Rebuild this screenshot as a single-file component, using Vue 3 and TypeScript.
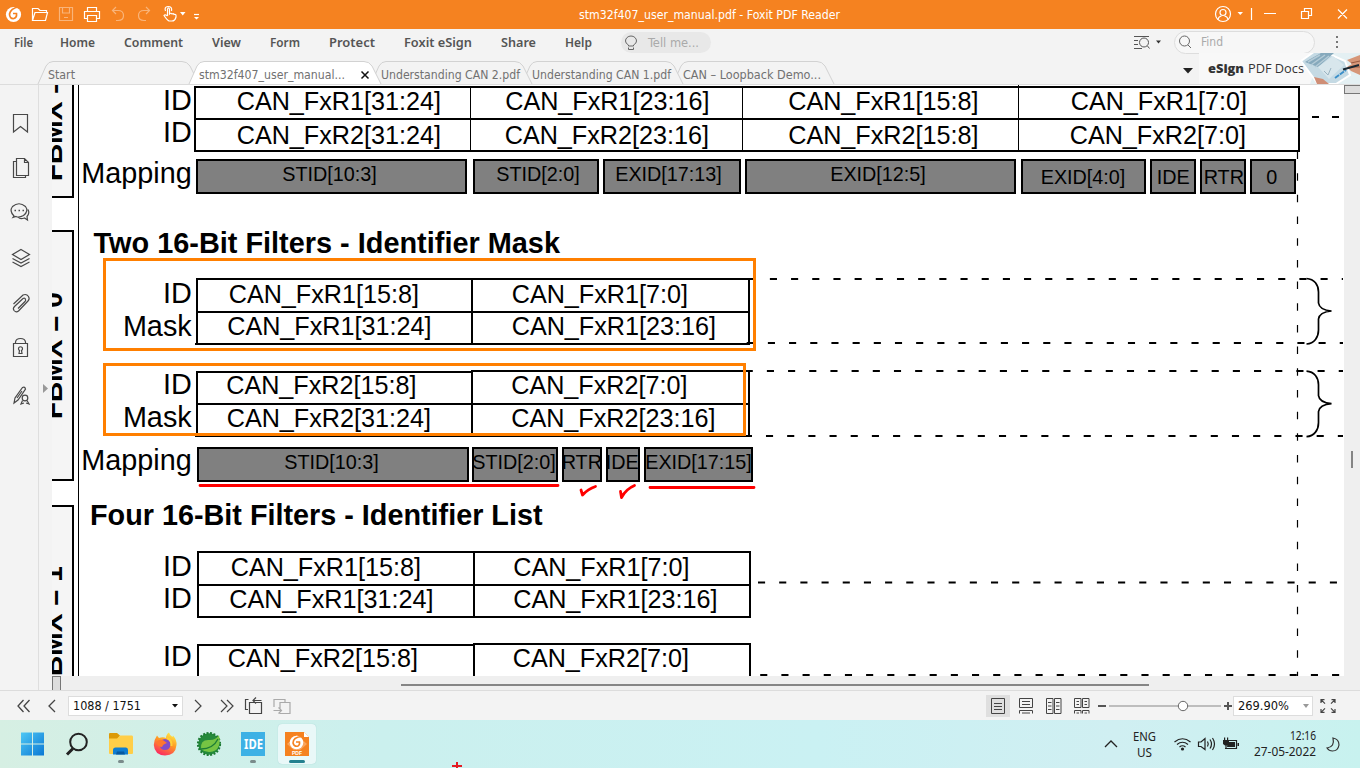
<script setup lang="ts">
import { h } from 'vue'

interface LabelProps { t: string; w: number; hgt?: number }

// Text fitted to a known width, so that interface labels keep their measure in any font.
const Label = (p: LabelProps) => {
  const height = p.hgt ?? 16
  return h('svg', { class: 'label', width: p.w, height, viewBox: `0 0 ${p.w} ${height}` }, [
    h('text', { x: 0, y: height - 4, textLength: p.w, lengthAdjust: 'spacingAndGlyphs', fill: 'currentColor' }, p.t),
  ])
}
Label.props = ['t', 'w', 'hgt']

const menus = [
  { t: 'File', w: 19 }, { t: 'Home', w: 35 }, { t: 'Comment', w: 59 }, { t: 'View', w: 29 },
  { t: 'Form', w: 30 }, { t: 'Protect', w: 46 }, { t: 'Foxit eSign', w: 68 },
  { t: 'Share', w: 35 }, { t: 'Help', w: 27 },
]

interface Tab { t: string; w: number; width: number; active?: boolean; z: number }
const tabs: Tab[] = [
  { t: 'Start', w: 27, width: 161, z: 1 },
  { t: 'stm32f407_user_manual...', w: 146, width: 192, active: true, z: 9 },
  { t: 'Understanding CAN 2.pdf', w: 139, width: 161, z: 4 },
  { t: 'Understanding CAN 1.pdf', w: 139, width: 161, z: 3 },
  { t: 'CAN – Loopback Demo...', w: 138, width: 161, z: 2 },
]
const tabPath = (w: number) => `M0 24 L8 6 Q10.500 1.500 15 1.500 H${w - 17} Q${w - 12} 1.500 ${w - 9} 6 L${w} 24`

type T = [string, number, number]
const rowLabels: T[] = [
  ['ID', 191.7, 110], ['ID', 191.7, 142], ['Mapping', 191.7, 183],
  ['ID', 191.7, 303], ['Mask', 191.7, 336], ['ID', 191.7, 393.500], ['Mask', 191.7, 427], ['Mapping', 191.7, 469.500],
  ['ID', 191.7, 575.500], ['ID', 191.7, 608], ['ID', 191.7, 666],
]
const cells: T[] = [
  ['CAN_FxR1[31:24]', 236, 110], ['CAN_FxR1[23:16]', 504.5, 110], ['CAN_FxR1[15:8]', 787.5, 110], ['CAN_FxR1[7:0]', 1070, 110],
  ['CAN_FxR2[31:24]', 236, 144], ['CAN_FxR2[23:16]', 504, 144], ['CAN_FxR2[15:8]', 787.5, 144], ['CAN_FxR2[7:0]', 1069, 144],
  ['CAN_FxR1[15:8]', 228, 303], ['CAN_FxR1[7:0]', 511, 303], ['CAN_FxR1[31:24]', 226.5, 335], ['CAN_FxR1[23:16]', 511, 335],
  ['CAN_FxR2[15:8]', 225.5, 394], ['CAN_FxR2[7:0]', 510.5, 394], ['CAN_FxR2[31:24]', 226, 427], ['CAN_FxR2[23:16]', 510.5, 427],
  ['CAN_FxR1[15:8]', 230, 576], ['CAN_FxR1[7:0]', 512.5, 576], ['CAN_FxR1[31:24]', 228.5, 608], ['CAN_FxR1[23:16]', 512.5, 608],
  ['CAN_FxR2[15:8]', 227, 667], ['CAN_FxR2[7:0]', 512, 667],
]
const bits: T[] = [
  ['STID[10:3]', 281.5, 181], ['STID[2:0]', 495.5, 181], ['EXID[17:13]', 614.5, 181], ['EXID[12:5]', 829.5, 181],
  ['EXID[4:0]', 1040, 184], ['IDE', 1156, 184], ['RTR', 1203, 184], ['0', 1265.500, 184],
  ['STID[10:3]', 283.5, 469], ['STID[2:0]', 471.500, 469], ['RTR', 561, 469], ['IDE', 605, 469], ['EXID[17:15]', 644.500, 469],
]
const upper = [[196, 271], [473, 126], [603, 138], [745, 271], [1021, 125], [1150, 46], [1200, 46], [1250, 46]]
const lower = [[197, 272], [472, 86], [562, 40], [606, 34], [644, 109]]
const dashes = [[748.7, 279], [746.7, 343], [745.7, 371], [744.800, 436], [758, 582.5], [760.2, 675]]
const braces = [278, 370.7]
</script>

<template>
  <div class="app">
    <header class="title">
      <div class="quick">
        <svg width="200" height="29" viewBox="0 0 200 29" fill="none" stroke="#fff" stroke-width="1.200">
          <circle cx="13.500" cy="14.500" r="7.600" fill="#fff" stroke="none" />
          <path d="M20 7 C13 7 10 11 9.500 14 Q9.500 19 14 18.500 Q17 17.500 16.500 13.500 L13 13.500" stroke="#f58220" stroke-width="1.700" />
          <path d="M32.500 20.500 V8.500 H38 L40 10.500 H46.500 V12.500 M32.500 20.500 H45.500 L47.500 12.500 H35 Z" />
          <g opacity=".4"><path d="M59.500 7.500 H72.500 V20.500 H59.500 Z M62.500 7.500 V13 H69.500 V7.500 M64 17.500 H68" /></g>
          <path d="M87.500 11 V7.500 H96.500 V11 M87.500 18.500 H84.500 V11.500 H99.500 V18.500 H96.500 M87.500 15.500 H96.500 V21.500 H87.500 Z" />
          <g opacity=".4">
            <path d="M113 10.500 H118 Q123.500 10.500 123.500 15.500 Q123.500 20.500 118 20.500 H116 M116 7 L112.500 10.500 L116 14" />
            <path d="M149 10.500 H144 Q138.500 10.500 138.500 15.500 Q138.500 20.500 144 20.500 H146 M146 7 L149.500 10.500 L146 14" />
          </g>
          <path d="M167.500 16 V9 Q168.500 7 169.500 9 V14 Q171 12.500 172 14 Q173.500 13 174 14.500 Q176 14 176 15.500 V17 Q175 21 172 21 H169 Q167 20 164 15.500 Q165 14 167.500 16 M165.500 11 Q164 7 168 6.500 Q172.500 6.500 171.500 11" />
          <path d="M180 12 H185.500 L182.750 15.500 Z M194 17 H199 L196.500 19.500 Z" fill="#fff" stroke="none" />
          <path d="M194 14.500 H199" />
        </svg>
      </div>
      <Label class="caption" t="stm32f407_user_manual.pdf - Foxit PDF Reader" :w="261" />
      <svg class="window" width="150" height="29" viewBox="0 0 150 29" fill="none" stroke="#fff" stroke-width="1.200">
        <circle cx="13" cy="14" r="7.500" /><circle cx="13" cy="12.500" r="3" /><path d="M8 19.500 Q8.500 16.500 11.500 16 M18 19.500 Q17.500 16.500 14.500 16" />
        <path d="M27.500 12 H33 L30.250 15 Z" fill="#fff" stroke="none" />
        <path d="M41.500 8 V20 M54 13.500 H66" />
        <path d="M91.500 11.500 H98.500 V18.500 H91.500 Z M94.500 11 V8.500 H101.500 V15.500 H99 M128 9.500 L137 18.500 M137 9.500 L128 18.500" />
      </svg>
    </header>

    <nav class="menu">
      <div class="items"><Label v-for="m in menus" :key="m.t" :t="m.t" :w="m.w" /></div>
      <div class="tell">
        <svg width="14" height="16" viewBox="0 0 14 16" fill="none" stroke="#666"><path d="M4.500 11 V10 Q1.500 8.500 1.500 6 A5.500 5 0 0 1 12.500 6 Q12.500 8.500 9.500 10 V11 Z M4.500 12.500 V14.500 H9.500 V12.500" /></svg>
        <Label t="Tell me..." :w="51" />
      </div>
      <div class="search">
        <svg class="adv" width="28" height="16" viewBox="0 0 28 16" fill="none" stroke="#555">
          <path d="M0 2.500 H15 M0 6.500 H4 M0 10.500 H4 M0 14.500 H8 M13.500 12 L15.500 14.500" /><circle cx="10" cy="8.500" r="4.500" /><path d="M22 6.500 H27 L24.500 9.500 Z" fill="#333" stroke="none" />
        </svg>
        <div class="find">
          <svg width="13" height="14" viewBox="0 0 13 14" fill="none" stroke="#666"><circle cx="5.500" cy="6" r="5" /><path d="M9 10 L12 13" /></svg>
          <Label t="Find" :w="22" />
        </div>
        <svg width="4" height="14" viewBox="0 0 4 14" fill="#777"><path d="M1 1h2v2H1zM1 6h2v2H1zM1 11h2v2H1z" /></svg>
      </div>
    </nav>

    <div class="tabs">
      <div v-for="tab in tabs" :key="tab.t" class="tab" :class="{ active: tab.active }" :style="{ width: tab.width + 'px', zIndex: tab.z }">
        <svg class="shape" :width="tab.width" height="24" :viewBox="`0 0 ${tab.width} 24`"><path :d="tabPath(tab.width)" :fill="tab.active ? '#fff' : '#f3f3f3'" stroke="#d2d2d2" /></svg>
        <Label class="tabtext" :t="tab.t" :w="tab.w" />
        <svg v-if="tab.active" class="close" width="8" height="8" viewBox="0 0 8 8" stroke="#111" stroke-width="1.500"><path d="M.5 .5 L7.500 7.500 M7.500 .5 L.5 7.500" /></svg>
      </div>
      <svg class="more" width="10" height="6" viewBox="0 0 10 6"><path d="M0 0 H10 L5 5.500 Z" fill="#222" /></svg>
      <div class="promo">
        <Label class="strong" t="eSign" :w="36" /><Label class="light" t="PDF Docs" :w="56" />
        <svg width="60" height="31" viewBox="0 0 60 31">
          <path d="M22 0 H60 V31 H10 Z" fill="#e4f0f3" />
          <path d="M1 8 L18 -4 L45 8 L50 22 L36 31 H18 Z" fill="#c5dae4" stroke="#fff" stroke-width="2" />
          <path d="M5 9 L21 0 L34 0 L18 14 Z" fill="#86a9bc" />
          <path d="M18 14 L33 3 L44 12 L29 26 Z" fill="#d8e6ec" />
          <path d="M8 9 L20 2 M11 12 L25 2 M15 14 L29 3" stroke="#b4cbd7" stroke-width="1.500" />
          <path d="M24 18 L28 22 L31 15" fill="none" stroke="#9ab3c1" />
          <path d="M35 25 L46 17" stroke="#3b8fc9" stroke-width="2" stroke-dasharray="5 1" />
          <path d="M14 24 L23 26 L29 31 H17 Z" fill="#cf8e76" />
          <path d="M47 7 L60 2 V22 L51 18 L47 14 L52 11 Z" fill="#d69678" /><path d="M51 10 L60 8 M52 14 L60 14" stroke="#99583f" />
          <path d="M43 16.500 L59 12" stroke="#192732" stroke-width="2" />
        </svg>
      </div>
    </div>

    <main class="work">
      <aside class="side">
        <svg width="38" height="340" viewBox="0 85 38 340" fill="none" stroke="#484848" stroke-width="1.200">
          <path d="M13.500 114.500 H27.500 V132 L20.500 126.500 L13.500 132 Z" />
          <path d="M16.500 158.500 H24.500 L28.500 162.500 V175.500 H16.500 Z M24.500 158.500 V162.500 H28.500 M16 161.500 H13.500 V177.500 H25.500 V176" />
          <path d="M14 216 Q9 211 12.500 206.500 Q19 201 25.500 206.500 Q29 211 23.500 215.500 Q19 218 16 216.500 L13 217.500 Z M28 209.500 Q30 213 27 216.500 L27.500 220 L24.500 218 Q20 219.500 18.500 217.500" />
          <path d="M14.500 210.500 H16 M18.500 210.500 H20 M22.500 210.500 H24" stroke-width="1.600" />
          <path d="M21 249.500 L29.500 254.500 L21 259.500 L12.500 254.500 Z M12.500 258.500 L21 263 L29.500 258.500 M12.500 262 L21 266.500 L29.500 262" />
          <path d="M13.500 304 L23 295 Q26.500 293.500 28.500 296.500 Q30 299 28 301 L18.500 311 Q16 313 14 310.500 Q12.500 308.500 14.500 306.500 L23 298.500 Q25 297.500 25.500 299.500 Q26 300.500 25 301.500 L18 308.500" />
          <path d="M13.500 343.500 H27.500 V356.500 H13.500 Z M15.500 343.500 V342 Q16 338.500 20.500 338.500 Q25 338.500 25.500 342 V343.500 M19.500 350.500 A2 2 0 1 1 21.500 350.500 L22 353.500 H19 Z" />
          <path d="M14 403 L15 398 L22.500 387.500 Q25 386.500 25.500 389 L18 400 Z M17 398 L22 391 M22.500 400.500 L21 404 L24 403 M27 400.500 L29 404 L26 403" /><circle cx="25" cy="398" r="2.800" />
        </svg>
      </aside>
      <div class="grip"><svg width="5" height="9" viewBox="0 0 5 9"><path d="M0 0 V9 L5 4.500 Z" fill="#999" /></svg></div>
      <div class="view">
        <svg class="page" width="1292" height="591" viewBox="52 85 1292 591" fill="none" stroke="#000">
          <g class="regs" fill="#f5f5f5" stroke-width="2">
            <rect x="30" y="60" width="43" height="137" /><rect x="30" y="231" width="43" height="249" /><rect x="30" y="506" width="43" height="200" />
          </g>
          <g class="fbm">
            <text transform="translate(61.5 181) rotate(-90)">FBMX = 1</text>
            <text transform="translate(61.5 419) rotate(-90)">FBMX = 0</text>
            <text transform="translate(61.5 693) rotate(-90)">FBMX = 1</text>
          </g>
          <path d="M78.500 85 V676 M742.500 87 V151 M1018.500 85 V151 M470.500 87 V151" />
          <g stroke-width="2">
            <path d="M195 87 H1299 V151 H195 Z M195 119 H1299" />
            <path d="M195 344 H750 M197 344 V279 H749 V344 M197 312 H749 M472 279 V344" />
            <path d="M195 436 H752 M197 436 V372 H472 M472 436 V371 H749 V436 M197 404 H749" />
            <path d="M198 552 H750 V617 H198 Z M198 585 H750 M474 552 V617 M198 680 V645 H474 M474 680 V644 H750 V680" />
            <g fill="#808080">
              <rect v-for="b in upper" :key="b[0]" :x="b[0]! + 1" y="160" :width="b[1]! - 2" height="33" />
              <rect v-for="b in lower" :key="b[0]" :x="b[0]! + 1" y="448" :width="b[1]! - 2" height="33" />
            </g>
            <path v-for="d in dashes" :key="d[1]" :d="`M${d[0]} ${d[1]} H1343`" stroke-dasharray="7.100 14.080" />
            <path d="M1312 117 H1339" stroke-dasharray="7 13" />
          </g>
          <path d="M1297.500 151.500 V676" stroke-dasharray="7.500 14.180" stroke-width="1.200" />
          <path v-for="y in braces" :key="y" :transform="`translate(1306.500 ${y})`" d="M0 .5 C8 1 12 7 12 14 V25 Q13 32 25 33 Q13 34 12 41 V52 C12 59 8 65.500 0 66" stroke-width="1.700" />
          <g class="head">
            <text x="93.500" y="252.500" textLength="466.500" lengthAdjust="spacingAndGlyphs">Two 16-Bit Filters - Identifier Mask</text>
            <text x="90" y="524.500" textLength="452.500" lengthAdjust="spacingAndGlyphs">Four 16-Bit Filters - Identifier List</text>
          </g>
          <g class="rowlabel"><text v-for="r in rowLabels" :key="r[2]" :x="r[1]" :y="r[2]">{{ r[0] }}</text></g>
          <g class="cell"><text v-for="(c, i) in cells" :key="i" :x="c[1] + 0.7" :y="c[2]">{{ c[0] }}</text></g>
          <g class="bit"><text v-for="(c, i) in bits" :key="i" :x="c[1] + 0.7" :y="c[2]">{{ c[0] }}</text></g>
          <g stroke="#ff7f00" stroke-width="3"><rect x="104.500" y="259.500" width="650" height="90" /><rect x="104.500" y="364.500" width="640" height="70" /></g>
          <g stroke="#f00" stroke-width="2.800" stroke-linecap="round" stroke-linejoin="round">
            <path d="M200 485.500 H558 M650 487.500 H754" />
            <path d="M581 490 L582.500 495 Q588 489 595.500 486.500 M620.500 491.500 L621.500 497.500 Q626 489 634.500 485.500" />
          </g>
        </svg>
        <div class="hbar"><i class="stub"></i><i class="hthumb"></i></div>
      </div>
      <div class="vbar"><i class="vtop"></i><i class="vthumb"></i></div>
    </main>

    <footer class="status">
      <svg width="40" height="14" viewBox="0 0 40 14" fill="none" stroke="#444" stroke-width="1.300"><path d="M6.500 1 L1 7 L6.500 13 M12.500 1 L7 7 L12.500 13 M38 1 L32 7 L38 13" /></svg>
      <div class="pagebox"><Label t="1088 / 1751" :w="68" /><svg width="6" height="4" viewBox="0 0 6 4"><path d="M0 0 H6 L3 3.500 Z" fill="#111" /></svg></div>
      <svg width="100" height="18" viewBox="0 0 100 18" fill="none" stroke="#444" stroke-width="1.200">
        <path d="M1 3 L7 9 L1 15 M27 3 L33 9 L27 15 M33 3 L39 9 L33 15" />
        <path d="M56 5.500 H68 V16.500 H56 Z M55 2.500 H52 V12.500 H54.500 M68 3.500 H59.500 M62.500 .5 L59.500 3.500 L62.500 6.500" transform="translate(-.5 0)" />
        <path d="M80 10 V2.500 H91 V5 M86 13 V5.500 H96 V16.500 H85.500 M79.500 13.500 H87.500 M84.500 10.500 L87.500 13.500 L84.500 16.500" stroke="#aaa" />
      </svg>
      <div class="modes">
        <span class="mode on"><svg width="16" height="16" viewBox="0 0 16 16"><path d="M1.500 .5 H14.500 V15.500 H1.500 Z M4 5.500 H12 M4 8.500 H12 M4 11.500 H12" /></svg></span>
        <span class="mode"><svg width="16" height="16" viewBox="0 0 16 16"><path d="M1.500 .5 H14.500 V9.500 H1.500 Z M4 3.500 H12 M4 6.500 H12 M1.500 15.500 V12.500 H14.500 V15.500 M4 15 H12" /></svg></span>
        <span class="mode"><svg width="16" height="16" viewBox="0 0 16 16"><path d="M.5 .5 H7 V15.500 H.5 Z M8.500 .5 H15 V15.500 H8.500 Z M2 4.500 H5.500 M2 8 H5.500 M2 11.500 H5.500 M10 4.500 H13.500 M10 8 H13.500 M10 11.500 H13.500" /></svg></span>
        <span class="mode"><svg width="16" height="16" viewBox="0 0 16 16"><path d="M.5 .5 H7 V9.500 H.5 Z M8.500 .5 H15 V9.500 H8.500 Z M2.500 3.500 H5 M2.500 6.500 H5 M10.500 3.500 H13 M10.500 6.500 H13 M.5 15.500 V12.500 H7 V15.500 M8.500 15.500 V12.500 H15 V15.500 M2.500 15 H5 M10.500 15 H13" /></svg></span>
      </div>
      <svg width="138" height="12" viewBox="0 0 138 12"><path d="M0 6 H8 M126 6 H134 M130 2 V10" stroke="#555" stroke-width="2" /><path d="M11 6 H123" stroke="#bdbdbd" stroke-width="2" /><circle cx="85" cy="6" r="4.700" fill="#fff" stroke="#666" /></svg>
      <div class="zoom"><Label t="269.90%" :w="51" /><svg width="6" height="4" viewBox="0 0 6 4"><path d="M0 0 H6 L3 4 Z" fill="#999" /></svg></div>
      <svg class="full" width="16" height="14" viewBox="0 0 16 14" fill="none" stroke="#444" stroke-width="1.200"><path d="M1 4 V.6 H4.500 M1 .6 L5 4.600 M11.500 .6 H15 V4 M15 .6 L11 4.600 M1 10 V13.400 H4.500 M1 13.400 L5 9.400 M15 10 V13.400 H11.500 M15 13.400 L11 9.400" /></svg>
    </footer>

    <div class="taskbar">
      <div class="pins">
        <span class="pin"><svg width="24" height="24" viewBox="0 0 24 24">
          <defs><linearGradient id="win" x1="0" y1="0" x2="1" y2="1" gradientUnits="objectBoundingBox"><stop offset="0" stop-color="#4fc8f5" /><stop offset="1" stop-color="#0a78d4" /></linearGradient></defs>
          <path d="M0 .5 H11 V11.500 H0 Z M12 .5 H23 V11.500 H12 Z M0 12.500 H11 V23.500 H0 Z M12 12.500 H23 V23.500 H12 Z" fill="url(#win)" /></svg></span>
        <span class="pin"><svg width="24" height="24" viewBox="0 0 24 24" fill="none" stroke="#222"><circle cx="13.500" cy="10" r="8.300" stroke-width="2" /><path d="M8 16.500 L2 22.500" stroke-width="3" /></svg></span>
        <span class="pin"><svg width="26" height="24" viewBox="0 0 26 24"><path d="M1 2 Q1 1 2 1 H9 L12 3.500 L10 7 H1 Z" fill="#dc9a08" /><path d="M1 6.500 H9 L12 3.500 H24 Q25 3.500 25 5 V21 Q25 22 24 22 H2 Q1 22 1 21 Z" fill="#ffce48" /><path d="M5 22.500 V18 Q5 15.500 7.500 15.500 H18 Q20 15.500 20 18 V22.500 Z" fill="#0f7dd0" /><path d="M8 22.500 L9 19.500 H16 L17 22.500 Z" fill="#0759a0" /></svg><i class="dot"></i></span>
        <span class="pin"><svg width="24" height="24" viewBox="0 0 24 24">
          <defs><linearGradient id="fox" x1=".8" y1="0" x2=".3" y2="1"><stop offset="0" stop-color="#fff04a" /><stop offset=".45" stop-color="#ff9a24" /><stop offset="1" stop-color="#fb2564" /></linearGradient></defs>
          <path d="M4 3.500 L6 6 Q10 4.500 13 6 Q13 2.500 16 .5 Q17 4 19.500 5 L20 3.500 Q24 8 23.500 13 Q22.500 23.500 12 23.500 Q1.500 23 .8 13 Q.8 8 4 3.500 Z" fill="url(#fox)" />
          <circle cx="12" cy="12.500" r="5.500" fill="#824cc8" /><path d="M3 10 Q8 6 12 9.500 L14 11 Q10 12 9 15 Q5 15 3 10 Z" fill="#ff7630" /><path d="M14 6 Q19 8 18.500 14" fill="none" stroke="#ffcf38" stroke-width="2" /></svg></span>
        <span class="pin"><svg width="26" height="26" viewBox="0 0 26 26"><circle cx="13" cy="13" r="10.700" fill="#258a3b" /><circle cx="13" cy="13" r="11" fill="none" stroke="#1c7b33" stroke-width="2.200" stroke-dasharray="2 1.500" /><path d="M5 18 Q4 8 14 9 Q20 9 23 4 Q26 20 14 21 Q9 21.500 5 18 Z" fill="#76c443" /><path d="M5 18 Q17 18 22 8" fill="none" stroke="#1d7d37" stroke-width="1.300" /></svg></span>
        <span class="pin"><span class="ide"><Label t="IDE" :w="19" :hgt="18" /></span><i class="dot"></i></span>
        <span class="pin sel"><svg width="24" height="24" viewBox="0 0 24 24"><path d="M0 0 H19 L24 5 V24 H0 Z" fill="#f58220" /><path d="M19 0 V5 H24" fill="#fff" /><path d="M2 12 L12 3 L22 12 L12 21 Z" fill="#f9a45d" /><circle cx="11.500" cy="10.500" r="6.800" fill="#fff" /><path d="M17 4.500 Q8 5 8 11 Q9 15 13 14 Q15 13 14.500 10 H11" fill="none" stroke="#f58220" stroke-width="1.600" /><rect x="6" y="18" width="12" height="5.500" fill="#f58220" /><text class="pdf" x="7" y="22.500" textLength="10" lengthAdjust="spacingAndGlyphs">PDF</text></svg><i class="dot wide"></i></span>
      </div>
      <svg class="cross" width="10" height="6" viewBox="0 0 10 6"><path d="M0 4 H10 M5 0 V6" stroke="#e31b23" stroke-width="2" /></svg>
      <div class="tray">
        <svg width="14" height="8" viewBox="0 0 14 8" fill="none" stroke="#222" stroke-width="1.300"><path d="M1 7 L7 1 L13 7" /></svg>
        <div class="lang"><Label t="ENG" :w="23" /><Label t="US" :w="15" /></div>
        <svg class="sys" width="66" height="16" viewBox="0 0 66 16" fill="none" stroke="#222" stroke-width="1.200">
          <path d="M.5 6 Q8.500 -.5 16.500 6 M3 8.500 Q8.500 4 14 8.500 M5.500 11 Q8.500 8.500 11.500 11" /><circle cx="8.500" cy="13" r="1.600" fill="#222" stroke="none" />
          <path d="M24.500 6 H27 L31 2.500 V13.500 L27 10.500 H24.500 Z M33.500 5.500 Q35 8 33.500 10.500 M36 3.500 Q39 8 36 12.500 M38.500 2 Q42.500 8 38.500 14" />
          <path d="M52 4.500 H62.500 V12.500 H51" /><path d="M54 6 H61 V11 H53 Z M63.500 7 H65 V10 H63.500 Z M49 4 H55 V8 L53 9.500 H51 L49 8 Z M50 1.500 H51.200 V4 H50 Z M53 1.500 H54.200 V4 H53 Z" fill="#222" stroke="none" /><path d="M52 9 V13" />
        </svg>
        <div class="clock"><Label t="12:16" :w="26" /><Label t="27-05-2022" :w="62" /></div>
        <svg width="14" height="15" viewBox="0 0 14 15" fill="none" stroke="#333" stroke-width="1.200"><path d="M7 1 Q13 2 13 8 Q12 14 6.500 14 Q3 14 1 11 Q9 10 7 1 Z" /></svg>
      </div>
    </div>
  </div>
</template>

<style>
html, body { background: #f3f3f3; overflow: hidden; }
</style>

<style scoped>
.app { width: 1360px; height: 768px; display: flex; flex-direction: column; overflow: hidden; background: #f3f3f3; font: 12px "DejaVu Sans Condensed", "DejaVu Sans", "Noto Sans", sans-serif; color: #555; }
svg { display: block; flex: none; overflow: visible; }
i { display: block; }
.title { height: 29px; flex: none; background: #f58220; color: #fff; display: grid; grid-template-columns: 579px 261px 1fr; align-items: center; }
.caption { margin-top: 1px; }
.window { justify-self: start; margin-left: 370px; }
.menu { height: 31px; flex: none; display: flex; align-items: center; }
.items { display: flex; gap: 29px; width: 621px; padding: 0 0 4px 14px; box-sizing: border-box; font-family: "Noto Sans", "Open Sans", sans-serif; font-weight: 600; font-size: 12.5px; color: #555; }
.items .label:first-child { margin-right: -2px; }
.tell { display: flex; align-items: center; gap: 10px; width: 90px; height: 21px; padding-left: 3px; margin-bottom: 4px; border-radius: 11px; background: #e8e8e8; color: #aaa; box-sizing: border-box; }
.search { margin-left: 423px; margin-bottom: 5px; display: flex; align-items: center; }
.adv { margin-right: 12px; }
.find { display: flex; align-items: center; gap: 9px; box-sizing: border-box; width: 141px; height: 23px; border: 1px solid #ddd; border-radius: 12px; background: #f7f7f7; padding-left: 4px; color: #aaa; margin-right: 20px; }
.tabs { height: 24px; flex: none; display: flex; padding-left: 38px; border-bottom: 1px solid #dcdcdc; color: #717171; }
.tab { height: 24px; display: flex; align-items: center; position: relative; margin-right: -10px; padding-left: 10px; box-sizing: border-box; flex: none; }
.shape { position: absolute; left: 0; top: 0; }
.tabtext { position: relative; margin-top: 5px; }
.close { position: relative; margin: 6px 0 0 16px; }
.more { margin: 8px 0 0 auto; align-self: flex-start; }
.promo { width: 161px; height: 31px; margin: -7px 0 0 6px; display: flex; align-items: center; background: #f8f8f8; box-sizing: border-box; padding-left: 9px; overflow: hidden; font-family: "Open Sans", sans-serif; font-size: 13px; color: #333; flex: none; }
.strong { font-weight: 800; margin-right: 4px; }
.light { margin-right: -4px; }
.work { height: 605px; flex: none; display: flex; }
.side { width: 38px; border-right: 1px solid #dedede; }
.grip { width: 13px; display: flex; box-sizing: border-box; padding: 299px 0 0 4px; }
.view { width: 1292px; background: #fff; }
.page { overflow: hidden; }
.page text { stroke: none; fill: #000; font-family: "Liberation Sans", Arial, sans-serif; }
.fbm text { font-weight: 700; font-size: 28px; }
.head text { font-weight: 700; font-size: 28.8px; }
.rowlabel text { font-size: 28.8px; text-anchor: end; }
.cell text { font-size: 25.2px; }
.bit text { font-size: 19.8px; }
.hbar { height: 14px; background: #efefef; display: flex; }
.stub { width: 7px; height: 14px; border: 1px solid #777; border-bottom: 0; background: #ddd; }
.hthumb { width: 748px; height: 2px; background: #858585; margin: 8px 0 0 340px; }
.vbar { width: 16px; background: #efefef; display: flex; flex-direction: column; align-items: center; }
.vtop { width: 17px; height: 9px; box-sizing: border-box; border: 1px solid #777; background: #ddd; }
.vthumb { width: 2px; height: 17px; background: #858585; margin-top: 357px; }
.status { height: 30px; flex: none; box-sizing: border-box; border-top: 1px solid #dcdcdc; display: flex; align-items: center; padding-left: 17px; }
.pagebox { width: 115px; height: 20px; border: 1px solid #ddd; background: #fff; box-sizing: border-box; display: flex; align-items: center; padding-left: 4px; gap: 31px; color: #111; margin: 0 11px; }
.modes { display: flex; gap: 4px; margin-left: auto; }
.mode { width: 24px; height: 22px; display: flex; align-items: center; justify-content: center; fill: none; stroke: #444; }
.on { background: #dfdfdf; }
.modes + svg { margin-left: 4px; }
.zoom { width: 80px; height: 20px; border: 1px solid #ddd; background: #fff; box-sizing: border-box; display: flex; align-items: center; gap: 14px; padding-left: 4px; color: #111; margin-left: -3px; }
.full { margin: 0 24px 0 7px; }
.taskbar { height: 48px; flex: none; background: linear-gradient(90deg, #d6efe3, #cbf0ee 28%, #caf1f3 60%, #d0eff2 82%, #c8f2ef); display: flex; align-items: center; position: relative; font-family: "Noto Sans", "Open Sans", sans-serif; font-size: 12px; }
.pins { display: flex; gap: 6px; padding-left: 14px; }
.pin { width: 38px; height: 40px; display: flex; align-items: center; justify-content: center; position: relative; border-radius: 4px; }
.pin.sel { background: #e9f8f8; box-shadow: 0 0 1px #9cc; }
.dot { position: absolute; bottom: 1px; width: 6px; height: 3px; border-radius: 2px; background: #7a8b8b; }
.wide { width: 16px; background: #24818f; }
.ide { width: 24px; height: 24px; background: #3db1e5; color: #fff; display: flex; align-items: center; justify-content: center; font-weight: 700; font-size: 14px; }
.pdf { fill: #fff; font: 700 5px "Liberation Sans", sans-serif; }
.cross { position: absolute; left: 452px; bottom: 0; }
.tray { margin-left: auto; display: flex; align-items: center; color: #222; padding-right: 20px; }
.lang, .clock { display: flex; flex-direction: column; align-items: center; }
.lang { margin: 1px 18px 0 15px; }
.clock { align-items: flex-end; margin: 0 10px 0 14px; }
</style>
